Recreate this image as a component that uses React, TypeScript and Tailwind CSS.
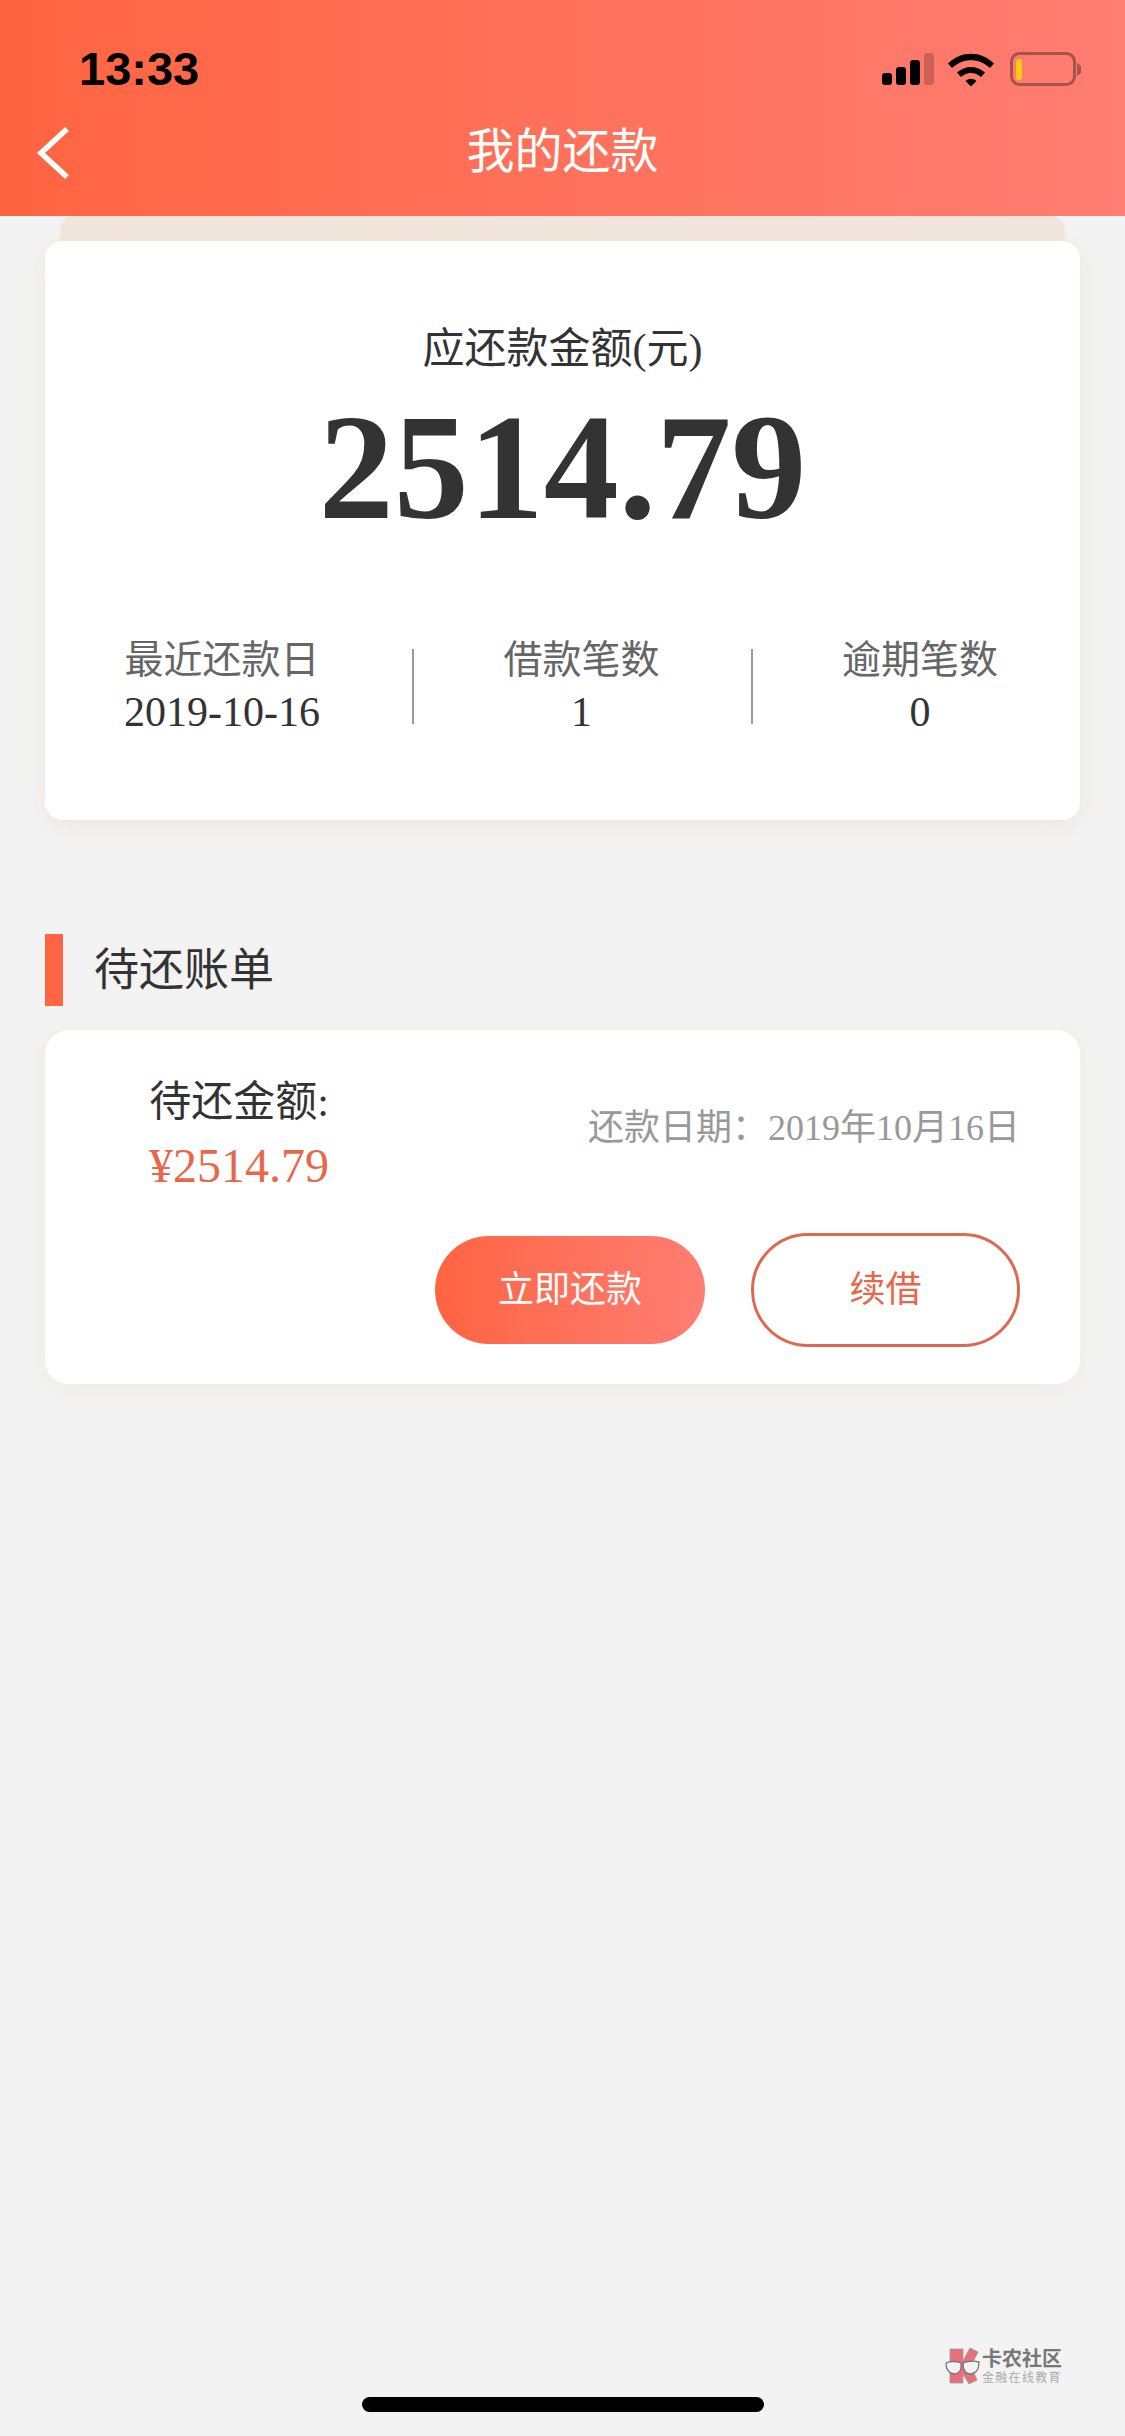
import React from 'react'

const serif = { fontFamily: '"Liberation Serif", "Noto Sans CJK SC", serif' }

function StatusIcons() {
  return (
    <svg width="204" height="36" viewBox="0 0 204 36" className="block">
      {/* signal */}
      <rect x="4" y="21" width="10" height="12" rx="3" fill="#000" />
      <rect x="18" y="15" width="10" height="18" rx="3" fill="#000" />
      <rect x="32" y="8" width="10" height="25" rx="3" fill="#000" />
      <rect x="46" y="1" width="10" height="32" rx="3" fill="#000" fillOpacity="0.2" />
      {/* wifi */}
      <path d="M70 11.5 C83 -1.5 103 -1.5 116 11.5 L112 16 C101 5.5 85 5.5 74 16 Z" fill="#000" />
      <path d="M79 20.5 C87 13 99 13 107 20.5 L103 25 C96.500 19.500 89.500 19.500 83 25 Z" fill="#000" />
      <path d="M87.500 29 C91 26 95 26 98.500 29 L93 34.500 Z" fill="#000" />
      {/* battery */}
      <rect x="133.500" y="1.500" width="63" height="31" rx="8" fill="none" stroke="#a8534a" strokeWidth="3" />
      <rect x="138" y="7" width="6" height="21" rx="2.500" fill="#ffc90d" />
      <path d="M199 11 L203 14 L203 21 L199 24 Z" fill="#a8534a" />
    </svg>
  )
}

function Stat({ label, value, className }: { label: string; value: string; className: string }) {
  return (
    <div className={`flex flex-col items-center ${className}`}>
      <span className="text-[39px] leading-[52px] text-[#666]">{label}</span>
      <span className="text-[42px] leading-[52px] text-[#333]">{value}</span>
    </div>
  )
}

export default function App() {
  return (
    <div className="flex h-[2436px] w-[1125px] flex-col overflow-hidden bg-[#f3f3f3]" style={serif}>
      {/* Header */}
      <header className="flex h-[216px] shrink-0 flex-col bg-gradient-to-r from-[#ff6440] to-[#ff7d72]">
        <div className="flex h-[110px] items-center justify-between pl-[79px] pr-[43px] pt-[30px]">
          <span className="-mt-[2px] text-[47px] leading-[52px] font-semibold text-black" style={{ fontFamily: '"Liberation Sans", sans-serif' }}>
            13:33
          </span>
          <StatusIcons />
        </div>
        <nav className="grid h-[80px] grid-cols-[1fr_auto_1fr] items-center">
          <svg width="34" height="54" viewBox="0 0 34 54" className="ml-[36px] mt-[6px]">
            <path d="M31 3 L5 27 L31 51" fill="none" stroke="#fff" strokeWidth="5.500" />
          </svg>
          <h1 className="mt-[4px] text-[48px] leading-[56px] font-normal text-white">我的还款</h1>
          <span />
        </nav>
      </header>

      <main className="flex flex-1 flex-col px-[45px]">
        {/* Summary card with peeking band */}
        <div className="mx-[15px] h-[25px] rounded-b-none rounded-t-[14px] bg-[#f2e6dc]" />
        <section className="flex h-[579px] flex-col items-center rounded-[18px] bg-white pt-[80px] shadow-[0_6px_20px_rgba(232,205,180,0.35)]">
          <p className="text-[42px] leading-[56px] text-[#333]">应还款金额(元)</p>
          <p className="mt-[10px] text-[150px] leading-[160px] font-bold text-[#333]">2514.79</p>
          <div className="mt-[87px] flex w-full items-center">
            <Stat className="mr-[13px] w-[354px]" label="最近还款日" value="2019-10-16" />
            <div className="h-[75px] w-[2px] shrink-0 bg-[#999]" />
            <Stat className="w-[337px] pr-[2px]" label="借款笔数" value="1" />
            <div className="h-[75px] w-[2px] shrink-0 bg-[#999]" />
            <Stat className="w-[327px] pl-[7px]" label="逾期笔数" value="0" />
          </div>
        </section>

        {/* Section title */}
        <div className="mt-[114px] flex h-[72px] items-center">
          <div className="h-full w-[18px] bg-[#ff6543]" />
          <h2 className="ml-[31px] mt-[2px] text-[45px] leading-[60px] font-normal text-[#333]">待还账单</h2>
        </div>

        {/* Bill card */}
        <section className="mt-[24px] h-[354px] rounded-[24px] bg-white pl-[104px] pr-[60px] pt-[42px] shadow-[0_4px_20px_rgba(232,205,180,0.22)]">
          <div className="flex items-center justify-between">
            <div className="flex flex-col items-center">
              <span className="text-[42px] leading-[60px] text-[#333]">待还金额:</span>
              <span className="mt-[4px] text-[48px] leading-[60px] text-[#e8674a]">¥2514.79</span>
            </div>
            <span className="mb-[12px] text-[36px] leading-[44px] text-[#999]">还款日期：2019年10月16日</span>
          </div>
          <div className="mt-[37px] flex items-center justify-end gap-[46px]">
            <button className="h-[108px] w-[270px] rounded-[54px] bg-gradient-to-r from-[#ff6440] to-[#ff7d72] text-[36px] text-white">
              立即还款
            </button>
            <button className="h-[114px] w-[269px] rounded-[57px] border-[3px] border-[#dd6a50] bg-white text-[36px] text-[#e8674a]">
              续借
            </button>
          </div>
        </section>

        {/* Watermark */}
        <div className="mt-auto flex items-center justify-end pr-[18px]">
          <svg width="37" height="36" viewBox="0 0 37 36">
            <path d="M5 1 L18 1 L18 13 L25 0 L33 4 L26 18 L32 32 L24 36 L18 26 L18 35 L5 35 Z" fill="#e8707c" stroke="#999" strokeWidth="0.800" />
            <path d="M1 15 Q8 12 16 15 Q17 26 9 26 Q1 25 1 15 Z" fill="#f3f3f3" stroke="#777" strokeWidth="1.300" />
            <path d="M18 15 Q26 12 34 14 Q34 25 26 26 Q18 26 18 15 Z" fill="#f3f3f3" stroke="#777" strokeWidth="1.300" />
          </svg>
          <div className="flex w-[80px] flex-col whitespace-nowrap" style={{ fontFamily: '"Noto Sans CJK SC", sans-serif' }}>
            <span className="text-[20px] leading-[22px] font-bold text-[#777]">卡农社区</span>
            <span className="text-[12px] leading-[15px] tracking-[1.300px] text-[#aaa]">金融在线教育</span>
          </div>
        </div>

        {/* Home indicator */}
        <div className="mx-auto mb-[24px] mt-[13px] h-[15px] w-[402px] rounded-full bg-black" />
      </main>
    </div>
  )
}
